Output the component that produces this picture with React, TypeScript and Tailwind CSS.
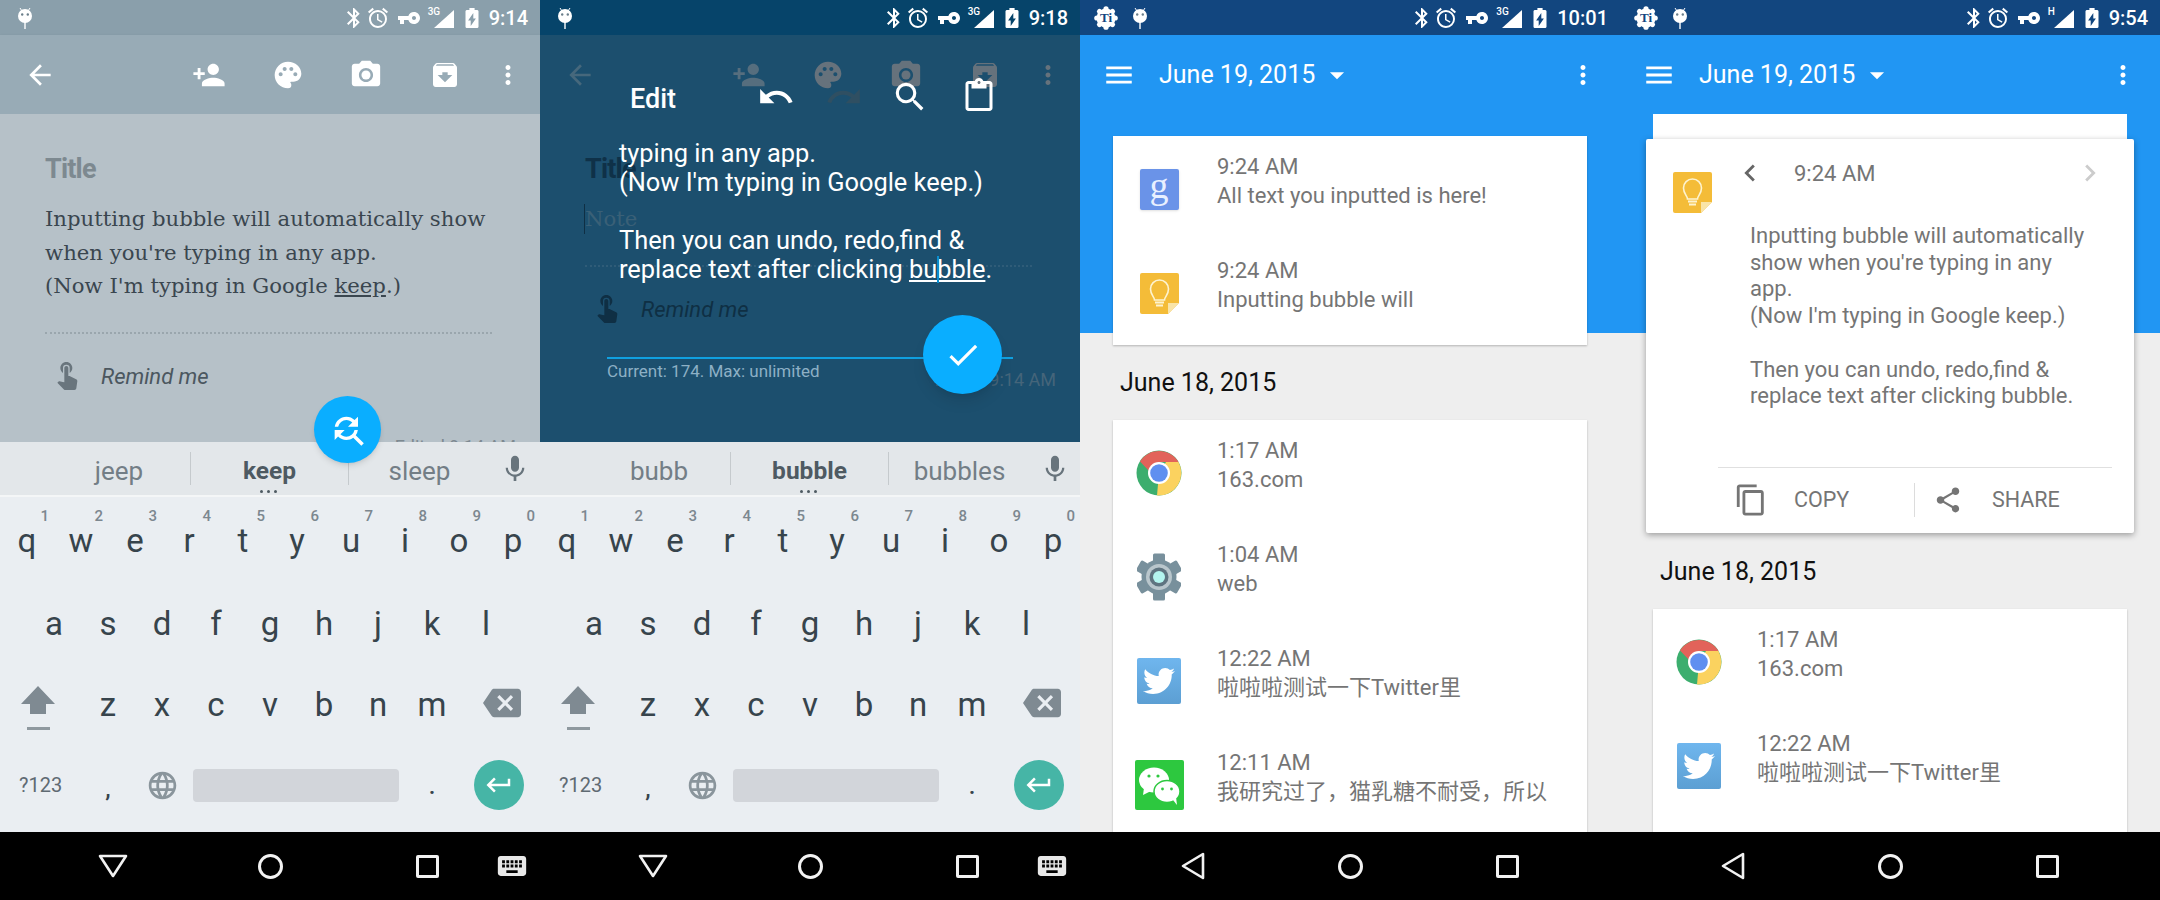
import type { ReactNode } from "react"
import {
  MdArrowBack, MdPersonAdd, MdPalette, MdCameraAlt, MdArchive, MdMoreVert, MdBluetooth, MdAccessAlarm, MdVpnKey,
  MdBatteryChargingFull, MdUndo, MdRedo, MdSearch, MdOutlineContentPaste, MdMic, MdLanguage, MdBackspace,
  MdKeyboardReturn, MdKeyboard, MdOutlineContentCopy, MdShare, MdChevronLeft, MdChevronRight, MdArrowDropDown,
  MdMenu, MdCheck, MdTouchApp, MdFindReplace,
} from "react-icons/md"
import { FaTwitter } from "react-icons/fa"

const AndroidGlyph = () => (
  <svg viewBox="0 0 16 22" className="w-[16px] h-[22px]" fill="white">
    <path d="M3 1l2 3M13 1l-2 3" stroke="white" strokeWidth="1" />
    <circle cx="8" cy="9" r="7" />
    <rect x="7.3" y="15" width="1.4" height="7" />
    <circle cx="5.2" cy="7.5" r="1.2" fill="#6b7f8b" />
    <circle cx="10.8" cy="7.5" r="1.2" fill="#6b7f8b" />
  </svg>
)

const TiGlyph = () => (
  <div className="relative w-[24px] h-[24px] flex items-center justify-center">
    <svg viewBox="0 0 24 24" className="w-[24px] h-[24px]" fill="white">
      <circle cx="12" cy="12" r="9.5" />
      {[0, 45, 90, 135, 180, 225, 270, 315].map((a) => (
        <circle key={a} cx="12" cy="2.8" r="2.6" transform={`rotate(${a} 12 12)`} />
      ))}
    </svg>
    <span className="absolute text-[13px] leading-none font-bold text-[#12467f] font-['Liberation_Serif',serif]">Ti</span>
  </div>
)

const StatusBar = ({ time, bg, net = "3G", ti = false }: { time: string; bg: string; net?: string; ti?: boolean }) => (
  <div className={`h-[35px] flex items-center text-white shrink-0 pr-[12px] ${bg} ${ti ? "pl-[14px]" : "pl-[17px]"}`}>
    {ti && <div className="mr-[14px]"><TiGlyph /></div>}
    <AndroidGlyph />
    <div className="flex-1" />
    <MdBluetooth className="w-[24px] h-[24px]" />
    <MdAccessAlarm className="w-[24px] h-[24px] mr-[7px]" />
    <MdVpnKey className="w-[24px] h-[24px] -scale-x-100 mr-[7px]" />
    <div className="relative w-[26px] h-[24px] mr-[6px]">
      <span className="absolute left-0 top-[1px] text-[10px] leading-none font-medium">{net}</span>
      <svg viewBox="0 0 20 18" className="absolute right-0 bottom-[2px] w-[20px] h-[18px]" fill="white"><path d="M20 0V18H0Z" /></svg>
    </div>
    <MdBatteryChargingFull className="w-[24px] h-[24px] mr-[5px] scale-x-[1.3]" />
    <span className="text-[20px] font-medium leading-none">{time}</span>
  </div>
)

const NavBar = ({ keyboard = false }: { keyboard?: boolean }) => (
  <div className="h-[68px] bg-black shrink-0 flex items-center pl-[34px] text-[#f2f2f2]">
    <div className="w-[157px] flex justify-center">
      {keyboard ? (
        <svg viewBox="0 0 30 24" className="w-[30px] h-[24px]" fill="none" stroke="currentColor" strokeWidth="2.6" strokeLinejoin="round"><path d="M2 2H28L15 22Z" /></svg>
      ) : (
        <svg viewBox="0 0 24 28" className="w-[24px] h-[28px]" fill="none" stroke="currentColor" strokeWidth="2.6" strokeLinejoin="round"><path d="M22 2V26L2 14Z" /></svg>
      )}
    </div>
    <div className="w-[158px] flex justify-center">
      <div className="w-[25px] h-[25px] rounded-full border-[3px] border-[#f2f2f2]" />
    </div>
    <div className="w-[157px] flex justify-center">
      <div className="w-[23px] h-[23px] rounded-[2px] border-[3px] border-[#f2f2f2]" />
    </div>
    {keyboard && <MdKeyboard className="w-[34px] h-[34px] text-[#e8e8e8] -ml-[11px]" />}
  </div>
)

const Key = ({ ch, hint }: { ch: string; hint?: string }) => (
  <div className="relative w-[54px] h-full flex items-center justify-center text-[33px] leading-none text-[#37444c]">
    {hint && <span className="absolute right-[5px] top-[10px] text-[15px] leading-[18px] font-medium text-[#7c878f]">{hint}</span>}
    <span className={hint ? "mt-[3px]" : ""}>{ch}</span>
  </div>
)

const Keyboard = ({ words }: { words: string[] }) => (
  <>
    <div className="h-[55px] bg-[#e3e7ea] shrink-0 border-b-2 border-[#f4f6f7] flex items-center relative">
      <div className="w-[190px] pl-[48px] flex justify-center text-[26px] leading-[34px] pt-[4px] text-[#737e86]">{words[0]}</div>
      <div className="w-px h-[33px] bg-[#c5cacd]" />
      <div className="w-[157px] flex justify-center text-[24.5px] leading-[34px] pt-[4px] font-bold text-[#4e5a62]">{words[1]}</div>
      <div className="w-px h-[33px] bg-[#c5cacd]" />
      <div className="w-[141px] flex justify-center text-[26px] leading-[34px] pt-[4px] text-[#737e86]">{words[2]}</div>
      <MdMic className="w-[32px] h-[32px] text-[#68747c] ml-[9px]" />
      <div className="absolute left-[260px] bottom-[2px] flex gap-[4px]">
        <i className="w-[3px] h-[3px] bg-[#4e5a62] rounded-full" />
        <i className="w-[3px] h-[3px] bg-[#4e5a62] rounded-full" />
        <i className="w-[3px] h-[3px] bg-[#4e5a62] rounded-full" />
      </div>
    </div>
    <div className="h-[335px] bg-[#eaeef2] shrink-0 flex flex-col">
      <div className="h-[84px] flex">
        {"qwertyuiop".split("").map((c, i) => <Key key={c} ch={c} hint={String((i + 1) % 10)} />)}
      </div>
      <div className="h-[84px] flex pl-[27px]">
        {"asdfghjkl".split("").map((c) => <Key key={c} ch={c} />)}
      </div>
      <div className="h-[84px] flex pb-[5px]">
        <div className="w-[76px] mr-[5px] flex flex-col items-center justify-center pt-[6px]">
          <svg viewBox="0 0 34 28" className="w-[34px] h-[28px]" fill="#7f8a92"><path d="M17 0L34 18H25V28H9V18H0Z" /></svg>
          <div className="w-[23px] h-[3px] bg-[#8f999f] mt-[13px]" />
        </div>
        {"zxcvbnm".split("").map((c) => <Key key={c} ch={c} />)}
        <div className="w-[81px] flex items-center justify-center pl-[4px] pb-[4px]">
          <MdBackspace className="w-[38px] h-[38px] text-[#7f8a92]" />
        </div>
      </div>
      <div className="h-[83px] flex items-center text-[#37444c] pb-[11px]">
        <div className="w-[81px] pl-[19px] text-[20px] text-[#5f6a72]">?123</div>
        <div className="w-[54px] text-center text-[24px] font-medium pt-[8px]">,</div>
        <div className="w-[54px] flex justify-center"><MdLanguage className="w-[33px] h-[33px] text-[#8a959c]" /></div>
        <div className="ml-[4px] w-[206px] h-[33px] bg-[#d2d5da] rounded-[4px]" />
        <div className="ml-[6px] w-[54px] text-center text-[24px] font-medium pt-[2px]">.</div>
        <div className="w-[81px] flex pl-[15px]">
          <div className="w-[50px] h-[50px] rounded-full bg-[#46b5a6] flex items-center justify-center">
            <MdKeyboardReturn className="w-[30px] h-[30px] text-white" />
          </div>
        </div>
      </div>
    </div>
  </>
)

const NoteBar = ({ bg, arrow, c1, c2, c3, c4, c5 }: { bg: string; arrow: string; c1: string; c2: string; c3: string; c4: string; c5: string }) => (
  <div className={`h-[79px] shrink-0 flex items-center pl-[24px] ${bg}`}>
    <MdArrowBack className={`w-[32px] h-[32px] ${arrow}`} />
    <MdPersonAdd className={`w-[34px] h-[34px] ml-[136px] ${c1}`} />
    <MdPalette className={`w-[32px] h-[32px] ml-[46px] ${c2}`} />
    <MdCameraAlt className={`w-[34px] h-[34px] ml-[45px] ${c3}`} />
    <MdArchive className={`w-[32px] h-[32px] ml-[46px] ${c4}`} />
    <MdMoreVert className={`w-[30px] h-[30px] ml-[32px] ${c5}`} />
  </div>
)

const NoteBody = ({ children, title, line, hand, remind, edited }: { children: ReactNode; title: string; line: string; hand: string; remind: string; edited: string }) => (
  <div className="flex-1 min-h-0 overflow-hidden pl-[45px] pr-[24px] pt-[37px]">
    <div className={`text-[27px] leading-[36px] font-bold tracking-[-0.8px] ${title}`}>Title</div>
    <div className="mt-[15px] font-['DejaVu_Serif',serif] text-[21.2px] leading-[33.5px] whitespace-nowrap">{children}</div>
    <div className={`mt-[29px] w-[447px] border-t-2 border-dotted ${line}`} />
    <div className="mt-[21px] h-[44px] flex items-center">
      <MdTouchApp className={`w-[32px] h-[32px] ml-[6px] -mt-[6px] ${hand}`} />
      <span className={`ml-[18px] text-[22px] italic ${remind}`}>Remind me</span>
    </div>
    <div className={`mt-[36px] text-right text-[18px] leading-[24px] ${edited}`}>Edited 9:14 AM</div>
  </div>
)

const NotePanel = () => (
  <div className="relative w-[540px] h-[900px] overflow-hidden flex flex-col">
    <StatusBar time="9:14" bg="bg-[#8a9fab]" />
    <NoteBar bg="bg-[#98abb6] shadow-sm" arrow="text-white" c1="text-white" c2="text-white" c3="text-white" c4="text-white" c5="text-white" />
    <div className="h-[328px] bg-[#b6c1c8] flex flex-col shrink-0">
      <NoteBody title="text-[#7d8990]" line="border-[#9aa6ad]" hand="text-[#69757d]" remind="text-[#4b575f]" edited="text-[#7d8990]">
        <div className="text-[#3a464f]">
          Inputting bubble will automatically show<br />
          when you're typing in any app.<br />
          (Now I'm typing in Google <span className="underline underline-offset-2">keep</span>.)
        </div>
      </NoteBody>
    </div>
    <Keyboard words={["jeep", "keep", "sleep"]} />
    <NavBar keyboard />
    <div className="absolute left-[314px] top-[396px] w-[67px] h-[67px] rounded-full bg-[#0aaeff] shadow-md flex items-center justify-center">
      <MdFindReplace className="w-[40px] h-[40px] text-white" />
    </div>
  </div>
)

const EditPanel = () => (
  <div className="relative w-[540px] h-[900px] overflow-hidden flex flex-col">
    <StatusBar time="9:18" bg="bg-[#06446a]" />
    <NoteBar bg="bg-[#1c4f6e]" arrow="text-[#46687c]" c1="text-[#566e7e]" c2="text-[#66727c]" c3="text-[#66727c]" c4="text-[#66727c]" c5="text-[#66727c]" />
    <div className="h-[328px] bg-[#1c4f6e] flex flex-col shrink-0 relative">
      <NoteBody title="text-[#0f3148]" line="border-[#2f5c78]" hand="text-[#0f2f44]" remind="text-[#0f2f44]" edited="text-[#45657a]">
        <div className="text-[#3a6077] relative">
          Note
          <div className="absolute -left-[1px] top-[2px] w-px h-[30px] bg-[#0f2f44]" />
        </div>
      </NoteBody>
    </div>
    <Keyboard words={["bubb", "bubble", "bubbles"]} />
    <NavBar keyboard />
    <div className="absolute left-[90px] top-[80px] text-[27px] leading-[38px] font-medium text-white">Edit</div>
    <MdUndo className="absolute left-[217px] top-[78px] w-[38px] h-[38px] text-white" />
    <MdRedo className="absolute left-[285px] top-[78px] w-[38px] h-[38px] text-[#2f4f62]" />
    <MdSearch className="absolute left-[351px] top-[78px] w-[38px] h-[38px] text-white" />
    <MdOutlineContentPaste className="absolute left-[421px] top-[78px] w-[36px] h-[36px] text-white" />
    <div className="absolute left-[79px] top-[139px] text-[25.4px] leading-[29px] text-white whitespace-nowrap">
      typing in any app.<br />
      (Now I'm typing in Google keep.)<br />
      <br />
      Then you can undo, redo,find &amp;<br />
      replace text after clicking <span className="underline underline-offset-2 relative">bubble<i className="absolute left-[28px] top-[2px] w-[2px] h-[27px] bg-[#0a8fd0]" /></span>.
    </div>
    <div className="absolute left-[67px] top-[357px] w-[406px] h-[2px] bg-[#10a0e0]" />
    <div className="absolute left-[67px] top-[361px] text-[17px] leading-[20px] text-[#8db0c5]">Current: 174. Max: unlimited</div>
    <div className="absolute left-[383px] top-[315px] w-[79px] h-[79px] rounded-full bg-[#0aaeff] shadow-lg flex items-center justify-center">
      <MdCheck className="w-[38px] h-[38px] text-white" />
    </div>
  </div>
)

const HistBar = () => (
  <div className="h-[79px] shrink-0 bg-[#2196f3] flex items-center pl-[22px] text-white">
    <MdMenu className="w-[34px] h-[34px]" />
    <span className="ml-[23px] text-[25px] leading-none">June 19, 2015</span>
    <MdArrowDropDown className="w-[34px] h-[34px] ml-[5px]" />
    <div className="flex-1" />
    <MdMoreVert className="w-[30px] h-[30px] mr-[22px]" />
  </div>
)

const GoogleIcon = () => (
  <div className="w-[39px] h-[41px] rounded-[2px] bg-[#6a93e8] flex items-center justify-center shadow-sm">
    <span className="font-['Liberation_Serif',serif] text-[38px] leading-none text-[#e8f0ff] -mt-[8px]">g</span>
  </div>
)

const KeepIcon = () => (
  <svg viewBox="0 0 39 41" className="w-[39px] h-[41px]">
    <path d="M2 0H37a2 2 0 0 1 2 2V30L28 41H2a2 2 0 0 1-2-2V2a2 2 0 0 1 2-2Z" fill="#f4bc38" />
    <path d="M39 30L28 41V30Z" fill="#f9e4a8" />
    <path d="M14.5 27c0-3-4-5-4-11a9 9 0 0 1 18 0c0 6-4 8-4 11Z" fill="none" stroke="#fdf3d0" strokeWidth="1.6" />
    <path d="M15 29.5h9M16 32.5h7" stroke="#fdf3d0" strokeWidth="1.8" />
  </svg>
)

const ChromeIcon = () => (
  <svg viewBox="0 0 46 48" className="w-[46px] h-[48px]">
    <circle cx="23" cy="24" r="22.5" fill="#3cae6e" />
    <path d="M4 12.5A22.5 22.5 0 0 1 42.5 13H23L13 22Z" fill="#e2635a" />
    <path d="M42.5 13A22.5 22.5 0 0 1 21 46.4L23 24L30 13Z" fill="#fbd25f" />
    <circle cx="23" cy="24" r="11" fill="white" />
    <circle cx="23" cy="24" r="8.8" fill="#5f8ff0" />
  </svg>
)

const GearIcon = () => (
  <svg viewBox="0 0 44 48" className="w-[44px] h-[48px]">
    {[0, 60, 120, 180, 240, 300].map((a) => (
      <rect key={a} x="16" y="0.5" width="12" height="12" rx="1.5" fill="#78909c" transform={`rotate(${a} 22 24)`} />
    ))}
    <circle cx="22" cy="24" r="17.5" fill="#78909c" />
    <circle cx="22" cy="24" r="13" fill="#b9c6cc" />
    <circle cx="22" cy="24" r="9.5" fill="#5f7480" />
    <circle cx="22" cy="24" r="6" fill="#b4f5ef" />
  </svg>
)

const TwitterIcon = () => (
  <div className="w-[44px] h-[46px] rounded-[2px] bg-gradient-to-b from-[#6fb6ee] to-[#5c9fd3] flex items-center justify-center">
    <FaTwitter className="w-[32px] h-[32px] text-white" />
  </div>
)

const WechatIcon = () => (
  <svg viewBox="0 0 49 50" className="w-[49px] h-[50px]">
    <rect width="49" height="50" rx="2" fill="#2dc83f" />
    <ellipse cx="19" cy="20" rx="15" ry="12.5" fill="white" />
    <path d="M9 28l-1 7 8-4Z" fill="white" />
    <ellipse cx="32" cy="31.5" rx="13" ry="11" fill="white" stroke="#2dc83f" strokeWidth="1.5" />
    <path d="M38 40l4 5-1-8Z" fill="white" />
    <circle cx="14" cy="16" r="1.6" fill="#2dc83f" />
    <circle cx="23" cy="16" r="1.6" fill="#2dc83f" />
    <circle cx="27.5" cy="29" r="1.4" fill="#2dc83f" />
    <circle cx="36.5" cy="29" r="1.4" fill="#2dc83f" />
  </svg>
)

const Row = ({ icon, time, text }: { icon: ReactNode; time: string; text: string }) => (
  <div className="h-[104px] flex shrink-0">
    <div className="w-[92px] mr-[12px] flex items-center justify-center">{icon}</div>
    <div className="pt-[15px] text-[22px] leading-[29px] text-[#757575] whitespace-nowrap">
      <div>{time}</div>
      <div>{text}</div>
    </div>
  </div>
)

const CARD = "bg-white shadow-[0_1px_2px_rgba(0,0,0,0.25)]"

const HistoryPanel = () => (
  <div className="w-[540px] h-[900px] overflow-hidden flex flex-col bg-[#eeeeee]">
    <StatusBar time="10:01" bg="bg-[#12467f]" ti />
    <HistBar />
    <div className="flex-1 min-h-0 overflow-hidden">
      <div className="h-[219px] bg-[#2196f3] px-[33px] pt-[22px]">
        <div className={`${CARD} pt-px h-[209px]`}>
          <Row icon={<GoogleIcon />} time="9:24 AM" text="All text you inputted is here!" />
          <Row icon={<KeepIcon />} time="9:24 AM" text="Inputting bubble will" />
        </div>
      </div>
      <div className="mt-[12px] h-[75px] pl-[40px] pt-[21px] text-[25px] leading-[34px] text-[#111]">June 18, 2015</div>
      <div className={`mx-[33px] pt-px h-[500px] ${CARD}`}>
        <Row icon={<ChromeIcon />} time="1:17 AM" text="163.com" />
        <Row icon={<GearIcon />} time="1:04 AM" text="web" />
        <Row icon={<TwitterIcon />} time="12:22 AM" text="啦啦啦测试一下Twitter里" />
        <Row icon={<WechatIcon />} time="12:11 AM" text="我研究过了，猫乳糖不耐受，所以" />
      </div>
    </div>
    <NavBar />
  </div>
)

const DetailPanel = () => (
  <div className="w-[540px] h-[900px] overflow-hidden flex flex-col bg-[#eeeeee]">
    <StatusBar time="9:54" bg="bg-[#12467f]" net="H" ti />
    <HistBar />
    <div className="flex-1 min-h-0 overflow-hidden">
      <div className="h-[219px] bg-[#2196f3] px-[26px]">
        <div className="mx-[7px] h-[25px] bg-white" />
        <div className="relative h-[394px] bg-white rounded-[2px] shadow-[0_2px_6px_rgba(0,0,0,0.35)] flex flex-col">
          <div className="flex pl-[27px] pt-[33px]">
            <KeepIcon />
            <MdChevronLeft className="w-[34px] h-[34px] text-[#666] ml-[21px] -mt-[16px]" />
            <span className="ml-[27px] -mt-[15px] text-[22px] leading-[34px] text-[#757575]">9:24 AM</span>
            <div className="flex-1" />
            <MdChevronRight className="w-[34px] h-[34px] text-[#ccc] mr-[27px] -mt-[16px]" />
          </div>
          <div className="ml-[104px] mt-[10px] text-[22px] leading-[26.7px] text-[#757575] whitespace-nowrap">
            Inputting bubble will automatically<br />
            show when you're typing in any<br />
            app.<br />
            (Now I'm typing in Google keep.)<br />
            <br />
            Then you can undo, redo,find &amp;<br />
            replace text after clicking bubble.
          </div>
          <div className="mt-[57px] ml-[72px] mr-[22px] h-px bg-[#e0e0e0]" />
          <div className="flex-1 flex items-center pl-[88px] text-[21.5px] text-[#757575]">
            <MdOutlineContentCopy className="w-[34px] h-[34px]" />
            <span className="ml-[26px] w-[120px]">COPY</span>
            <div className="w-px h-[34px] bg-[#dcdcdc]" />
            <MdShare className="w-[30px] h-[30px] ml-[18px]" />
            <span className="ml-[29px]">SHARE</span>
          </div>
        </div>
      </div>
      <div className="mt-[222px] h-[54px] pl-[40px] text-[25px] leading-[34px] text-[#111]">June 18, 2015</div>
      <div className={`mx-[33px] pt-px h-[300px] ${CARD}`}>
        <Row icon={<ChromeIcon />} time="1:17 AM" text="163.com" />
        <Row icon={<TwitterIcon />} time="12:22 AM" text="啦啦啦测试一下Twitter里" />
      </div>
    </div>
    <NavBar />
  </div>
)

export default function App() {
  return (
    <div className="w-[2160px] h-[900px] flex overflow-hidden font-['Roboto','Noto_Sans_CJK_SC',sans-serif]">
      <NotePanel />
      <EditPanel />
      <HistoryPanel />
      <DetailPanel />
    </div>
  )
}
